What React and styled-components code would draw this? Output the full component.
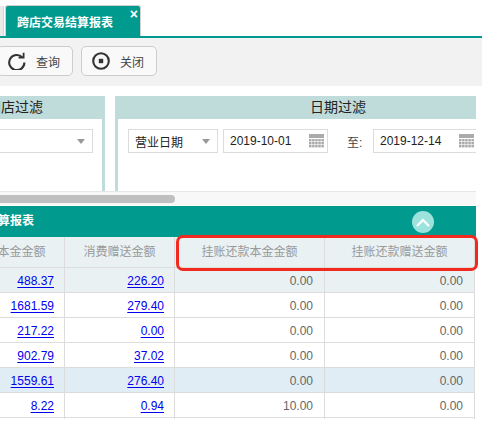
import React from 'react';
import styled, { createGlobalStyle } from 'styled-components';

const GlobalStyle = createGlobalStyle`
  html, body {
    margin: 0;
    padding: 0;
    background: #fff;
    overflow: hidden;
    font-family: "Liberation Sans", "Noto Sans CJK SC", sans-serif;
    font-size: 12px;
    color: #333;
  }
`;

const Page = styled.div`
  position: relative;
  width: 482px;
  height: 426px;
  overflow: hidden;
`;

// Tabs
const TabBar = styled.div`
  display: flex;
  align-items: flex-end;
  gap: 1px;
  height: 36px;
  border-bottom: 2px solid #009a8e;
`;

const TabStub = styled.div`
  width: 3px;
  height: 30px;
  background: #e9e9e9;
  border-right: 1px solid #d5d5d5;
`;

const Tab = styled.div`
  position: relative;
  width: 136px;
  height: 31px;
  box-sizing: border-box;
  padding: 8px 0 0 11px;
  background: #009a8e;
  border: 1px solid #cfcfcf;
  border-bottom: none;
  border-radius: 3px 3px 0 0;
  color: #fff;
  font-weight: bold;
  line-height: 18px;
`;

const TabClose = styled.span`
  position: absolute;
  top: 1px;
  right: 2px;
  font-size: 14px;
  line-height: 14px;
  font-weight: bold;
`;

// Toolbar
const Toolbar = styled.div`
  display: flex;
  gap: 8px;
  height: 48px;
  box-sizing: border-box;
  padding-top: 8px;
  margin-left: -3px;
  background: #f2f2f2;
`;

const ToolButton = styled.div`
  display: flex;
  align-items: center;
  gap: 10px;
  width: 76px;
  height: 30px;
  box-sizing: border-box;
  padding-left: 10px;
  background: #f9f9f9;
  border: 1px solid #cdcdcd;
  border-radius: 5px;
  color: #444;
`;

// Everything below the toolbar stops 6px short of the window edge
const Content = styled.div`
  width: 476px;
  overflow: hidden;
`;

// Filter panels
const FilterArea = styled.div`
  margin-top: 10px;
  overflow: hidden;
  height: 95px;
`;

const FilterRow = styled.div`
  display: flex;
  gap: 10px;
  margin-left: -75px;
  width: 700px;
`;

const Panel = styled.div`
  width: ${props => props.$width}px;
  height: 95px;
  flex-shrink: 0;
  box-sizing: border-box;
  border: solid #bfdcda;
  border-width: 0 3px;
`;

const PanelTitle = styled.div`
  height: 23px;
  margin: 0 -3px;
  background: #bfdcda;
  color: #222;
  font-size: 14px;
  line-height: 23px;
  text-align: center;
`;

const PanelBody = styled.div`
  display: flex;
  align-items: center;
  gap: 5px;
  padding: 10px 0 0 10px;
`;

const Field = styled.div`
  display: flex;
  align-items: center;
  justify-content: space-between;
  flex-shrink: 0;
  width: ${props => props.$width}px;
  height: 24px;
  box-sizing: border-box;
  padding: 0 ${props => props.$padRight ?? 7}px 0 6px;
  border: 1px solid #dcdcdc;
  color: #222;
`;

const Arrow = styled.span`
  width: 0;
  height: 0;
  border: solid transparent;
  border-width: 5px 4px 0;
  border-top-color: #999;
`;

const ToLabel = styled.span`
  width: 35px;
  box-sizing: border-box;
  padding-left: 14px;
  flex-shrink: 0;
  color: #444;
`;

const ScrollTrack = styled.div`
  height: 14px;
  box-sizing: border-box;
  padding-top: 3px;
  background: #f8f8f8;
  border-top: 1px solid #e6e6e6;
`;

const ScrollThumb = styled.div`
  width: 175px;
  height: 8px;
  background: #bfbfbf;
  border-radius: 0 4px 4px 0;
`;

// Report table
const TitleBar = styled.div`
  position: relative;
  margin-top: 1px;
  margin-left: -62px;
  height: 31px;
  width: 544px;
  background: #009a8e;
  color: #fff;
  font-weight: bold;
  line-height: 30px;
`;

const CollapseButton = styled.div`
  position: absolute;
  top: 5px;
  left: 474px;
  width: 22px;
  height: 22px;
  display: flex;
  align-items: center;
  justify-content: center;
  border-radius: 50%;
  background: #9de3dd;
`;

const Table = styled.div`
  margin-left: -45px;
  width: 520px;
`;

const Row = styled.div`
  display: grid;
  grid-template-columns: 110px 110px 150px 150px;
  height: ${props => (props.$head ? 31 : 25)}px;
  box-sizing: border-box;
  background: ${props => props.$bg || '#fff'};
  border-bottom: 1px solid #dcdcdc;
`;

const Cell = styled.div`
  box-sizing: border-box;
  padding-right: 11px;
  border-right: 1px solid #dcdcdc;
  text-align: right;
  line-height: 26px;
  color: #666;
`;

const LinkCell = styled(Cell)`
  padding-right: 10px;
`;

const HeadCell = styled(Cell)`
  padding: 0;
  text-align: center;
  line-height: 30px;
  color: #999;
`;

const Amount = styled.a`
  color: #0000ee;
  text-decoration: underline;
  text-underline-offset: 2px;
`;

const Highlight = styled.div`
  position: absolute;
  left: 176px;
  top: 235px;
  width: 302px;
  height: 36px;
  box-sizing: border-box;
  border: 3px solid #f2291f;
  border-radius: 7px;
`;

const RefreshIcon = () => (
  <svg width="18" height="18" viewBox="0 0 18 18" fill="none" stroke="#333" strokeWidth="2.1">
    <path d="M14.2 5.2A7.6 7.6 0 1 0 16.4 10.5" />
    <path d="M10.6 5.6h5V0.8" strokeWidth="1.8" />
  </svg>
);

const StopIcon = () => (
  <svg width="18" height="18" viewBox="0 0 18 18" fill="none">
    <circle cx="9" cy="9" r="7.8" stroke="#333" strokeWidth="2.1" />
    <rect x="6.8" y="6.8" width="4.4" height="4.4" fill="#333" />
  </svg>
);

const CalendarIcon = () => (
  <svg width="15" height="15" viewBox="0 0 15 15" fill="#aaa">
    <rect x="0" y="0" width="15" height="4" />
    {[5, 8, 11].map(y =>
      [0, 3.1, 6.2, 9.3, 12.4].map(x => (
        <rect key={`${x}-${y}`} x={x} y={y} width="2.5" height="2.4" />
      ))
    )}
  </svg>
);

const rows = [
  { a: '488.37', b: '226.20', c: '0.00', d: '0.00', bg: '#e9f1f2' },
  { a: '1681.59', b: '279.40', c: '0.00', d: '0.00' },
  { a: '217.22', b: '0.00', c: '0.00', d: '0.00' },
  { a: '902.79', b: '37.02', c: '0.00', d: '0.00' },
  { a: '1559.61', b: '276.40', c: '0.00', d: '0.00', bg: '#e1edf5' },
  { a: '8.22', b: '0.94', c: '10.00', d: '0.00' },
];

export default function App() {
  return (
    <Page>
      <GlobalStyle />
      <TabBar>
        <TabStub />
        <Tab>
          跨店交易结算报表
          <TabClose>×</TabClose>
        </Tab>
      </TabBar>

      <Toolbar>
        <ToolButton>
          <RefreshIcon />
          查询
        </ToolButton>
        <ToolButton>
          <StopIcon />
          关闭
        </ToolButton>
      </Toolbar>

      <Content>
        <FilterArea>
          <FilterRow>
            <Panel $width={180}>
              <PanelTitle>门店过滤</PanelTitle>
              <PanelBody>
                <Field $width={155}>
                  <span />
                  <Arrow />
                </Field>
              </PanelBody>
            </Panel>
            <Panel $width={446}>
              <PanelTitle>日期过滤</PanelTitle>
              <PanelBody>
                <Field $width={90}>
                  营业日期
                  <Arrow />
                </Field>
                <Field $width={105} $padRight={3}>
                  2019-10-01
                  <CalendarIcon />
                </Field>
                <ToLabel>至:</ToLabel>
                <Field $width={105} $padRight={3}>
                  2019-12-14
                  <CalendarIcon />
                </Field>
              </PanelBody>
            </Panel>
          </FilterRow>
        </FilterArea>
        <ScrollTrack>
          <ScrollThumb />
        </ScrollTrack>

        <TitleBar>
          跨店交易结算报表
          <CollapseButton>
            <svg width="14" height="9" viewBox="0 0 14 9" fill="none" stroke="#fff" strokeWidth="2.2">
              <path d="M1 8l6-6 6 6" />
            </svg>
          </CollapseButton>
        </TitleBar>

        <Table>
          <Row $head $bg="#e9f1f2">
            <HeadCell>挂账本金金额</HeadCell>
            <HeadCell>消费赠送金额</HeadCell>
            <HeadCell>挂账还款本金金额</HeadCell>
            <HeadCell>挂账还款赠送金额</HeadCell>
          </Row>
          {rows.map(row => (
            <Row key={row.a} $bg={row.bg}>
              <LinkCell><Amount>{row.a}</Amount></LinkCell>
              <LinkCell><Amount>{row.b}</Amount></LinkCell>
              <Cell>{row.c}</Cell>
              <Cell>{row.d}</Cell>
            </Row>
          ))}
          <Row />
        </Table>
      </Content>

      <Highlight />
    </Page>
  );
}
